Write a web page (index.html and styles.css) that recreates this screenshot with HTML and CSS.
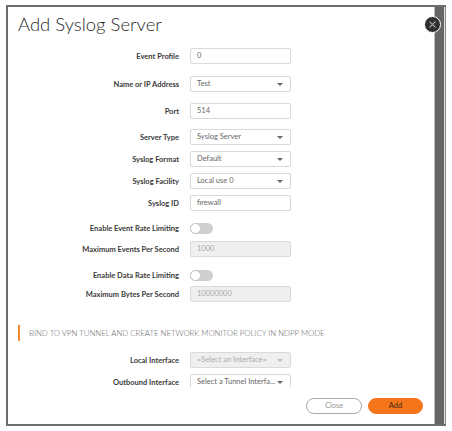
FILE: index.html
```html
<!DOCTYPE html>
<html>
<head>
<meta charset="utf-8">
<link rel="stylesheet" href="styles.css">
</head>
<body>
<div class="frame">
  <div class="dialog">
    <h1 class="title">Add Syslog Server</h1>
    <div class="scroll">
      <div class="row first"><span class="label">Event Profile</span><div class="field">0</div></div>
      <div class="row m12"><span class="label">Name or IP Address</span><div class="field select">Test</div></div>
      <div class="row m11"><span class="label">Port</span><div class="field">514</div></div>
      <div class="row m10"><span class="label">Server Type</span><div class="field select">Syslog Server</div></div>
      <div class="row m6"><span class="label">Syslog Format</span><div class="field select">Default</div></div>
      <div class="row m6"><span class="label">Syslog Facility</span><div class="field select">Local use 0</div></div>
      <div class="row m6"><span class="label">Syslog ID</span><div class="field">firewall</div></div>
      <div class="row toggle-row m12"><span class="label">Enable Event Rate Limiting</span><div class="toggle"><span class="knob"></span></div></div>
      <div class="row m7"><span class="label">Maximum Events Per Second</span><div class="field disabled">1000</div></div>
      <div class="row toggle-row m13"><span class="label">Enable Data Rate Limiting</span><div class="toggle"><span class="knob"></span></div></div>
      <div class="row m5"><span class="label">Maximum Bytes Per Second</span><div class="field disabled">10000000</div></div>
      <div class="section">BIND TO VPN TUNNEL AND CREATE NETWORK MONITOR POLICY IN NDPP MODE</div>
      <div class="row m11"><span class="label">Local Interface</span><div class="field select disabled">=Select an Interface=</div></div>
      <div class="row m6"><span class="label">Outbound Interface</span><div class="field select">Select a Tunnel Interfa...</div></div>
    </div>
    <div class="footer">
      <button class="btn btn-close">Close</button>
      <button class="btn btn-add">Add</button>
    </div>
  </div>
  <div class="band"></div>
  <div class="edge"></div>
  <div class="close-x">
    <svg width="9" height="9" viewBox="0 0 9 9"><path d="M1.5 1.5 L7.5 7.5 M7.5 1.5 L1.5 7.5" stroke="#9a9a9a" stroke-width="1.2" fill="none"/></svg>
  </div>
</div>
</body>
</html>
```
FILE: styles.css
```css
html, body {
  margin: 0;
  padding: 0;
  background: #ffffff;
}
body {
  font-family: Lato, "Open Sans", sans-serif;
  color: #333;
}
.frame {
  position: relative;
  margin: 5px 0 0 6px;
  width: 440px;
  height: 421px;
  box-sizing: border-box;
  border: 2px solid #6e6e6e;
  border-right: none;
  display: flex;
}
.dialog {
  width: 426px;
  background: #fff;
  display: flex;
  flex-direction: column;
}
.band {
  width: 9px;
  background: #666;
  border-left: 1px solid #bdbdbd;
}
.edge {
  width: 2px;
  background: linear-gradient(to right, #e2e2e2 50%, #8a8a8a 50%);
}
.close-x {
  position: absolute;
  left: 416px;
  top: 9px;
  width: 15px;
  height: 15px;
  border-radius: 50%;
  background: #2e2e2e;
  border: 1px solid #fff;
  display: flex;
  align-items: center;
  justify-content: center;
}
.title {
  margin: 0;
  padding: 6px 0 0 10px;
  font-size: 18.5px;
  line-height: 22px;
  font-weight: 300;
  color: #2a2a2a;
}
.scroll {
  height: 352px;
  overflow: hidden;
  padding-top: 13px;
  box-sizing: border-box;
}
.row {
  display: grid;
  grid-template-columns: 171px 101px;
  column-gap: 11px;
  align-items: center;
}
.m5 { margin-top: 5px; }
.m6 { margin-top: 6px; }
.m7 { margin-top: 7px; }
.m10 { margin-top: 10px; }
.m11 { margin-top: 11px; }
.m12 { margin-top: 12px; }
.m13 { margin-top: 13px; }
.label {
  text-align: right;
  font-size: 7.5px;
  font-weight: 700;
  color: #3a3a3a;
  line-height: 11px;
}
.field {
  position: relative;
  height: 16px;
  box-sizing: border-box;
  border: 1px solid #d9d9d9;
  border-radius: 2px;
  background: #fff;
  font-size: 7.5px;
  line-height: 14px;
  color: #666;
  padding-left: 6px;
  white-space: nowrap;
  overflow: hidden;
}
.field.disabled {
  background: #efefef;
  color: #aaa;
}
.field.select::after {
  content: "";
  position: absolute;
  right: 7px;
  top: 6px;
  border-left: 3.5px solid transparent;
  border-right: 3.5px solid transparent;
  border-top: 3.5px solid #666;
}
.field.select.disabled::after {
  border-top-color: #bbb;
}
.toggle-row .label {
  line-height: 11px;
}
.toggle {
  width: 23px;
  height: 11px;
  border-radius: 6px;
  background: #cfcfcf;
  position: relative;
}
.knob {
  position: absolute;
  left: 0;
  top: 0;
  width: 11px;
  height: 11px;
  box-sizing: border-box;
  border-radius: 50%;
  background: #fff;
  border: 1px solid #c4c4c4;
}
.section {
  margin: 23px 0 0 10px;
  height: 16px;
  border-left: 2px solid #f28b30;
  padding-left: 9px;
  font-size: 7.8px;
  font-weight: 300;
  line-height: 16px;
  color: #666;
  white-space: nowrap;
}
.footer {
  display: flex;
  justify-content: flex-end;
  gap: 6px;
  padding: 11px 11px 0 0;
}
.btn {
  height: 16px;
  border-radius: 8px;
  font-family: Lato, "Open Sans", sans-serif;
  font-size: 7.5px;
  line-height: 14px;
  padding: 0;
  box-sizing: border-box;
  cursor: pointer;
}
.btn-close {
  width: 56px;
  background: #fff;
  border: 1px solid #aaa;
  color: #999;
}
.btn-add {
  width: 55px;
  background: #f5761a;
  border: 1px solid #f5761a;
  color: #3a2a1a;
}
```
